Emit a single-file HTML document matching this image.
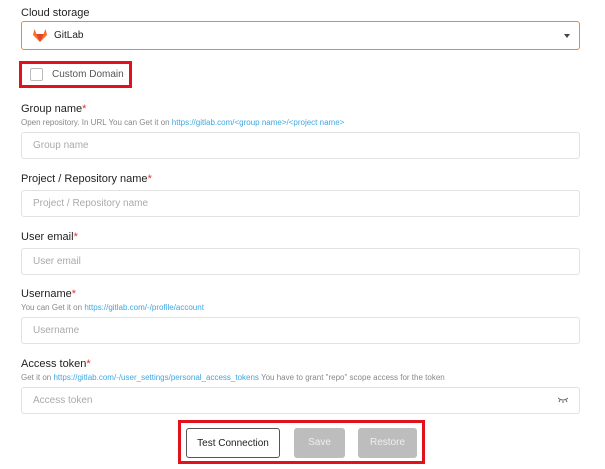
<!DOCTYPE html><html><head><style>
body{margin:0;width:605px;height:469px;background:#fff;font-family:"Liberation Sans",sans-serif;position:relative;overflow:hidden}
.a{position:absolute}
.lbl{font-size:11px;color:#222}
.lbl b{color:#e5332a;font-weight:normal}
.hint{font-size:8px;color:#888}
.hint span{color:#3fa7e0}
.in{position:absolute;left:21px;border:1px solid #e2e2e2;border-radius:3px;font-size:10px;color:#aaa;line-height:26px;padding-left:11px;box-sizing:border-box;width:559px;height:27px}
.btn{position:absolute;top:428px;height:30px;border-radius:3px;font-size:10px;text-align:center;line-height:30px;box-sizing:border-box}
</style></head><body>
<div class="a lbl" style="left:21px;top:7px">Cloud storage</div>
<div class="a" style="left:21px;top:21px;width:559px;height:29px;border:1px solid #f5891d;border-radius:3px;box-sizing:border-box"></div>
<svg class="a" style="left:33px;top:29px" width="14" height="13" viewBox="0 0 14 13"><path d="M7 13 L0 6 L1.5 0 L3.5 5 H10.5 L12.5 0 L14 6 Z" fill="#fc6d26"/><path d="M7 13 L3.5 5 H10.5 Z" fill="#e24329"/></svg>
<div class="a" style="left:54px;top:30px;font-size:10px;color:#222">GitLab</div>
<div class="a" style="left:564px;top:34px;width:0;height:0;border-left:3.5px solid transparent;border-right:3.5px solid transparent;border-top:4px solid #444"></div>
<div class="a" style="left:19px;top:61px;width:113px;height:27px;border:3px solid #e0131c;box-sizing:border-box"></div>
<div class="a" style="left:30px;top:68px;width:11px;height:11px;border:1px solid #bbb;border-radius:2px"></div>
<div class="a" style="left:52px;top:69px;font-size:10px;color:#555">Custom Domain</div>
<div class="a lbl" style="left:21px;top:103px">Group name<b>*</b></div>
<div class="a hint" style="left:21px;top:118px">Open repository. In URL You can Get it on <span>https://gitlab.com/&lt;group name&gt;/&lt;project name&gt;</span></div>
<div class="in" style="top:132px">Group name</div>
<div class="a lbl" style="left:21px;top:173px">Project / Repository name<b>*</b></div>
<div class="in" style="top:190px">Project / Repository name</div>
<div class="a lbl" style="left:21px;top:231px">User email<b>*</b></div>
<div class="in" style="top:248px">User email</div>
<div class="a lbl" style="left:21px;top:288px">Username<b>*</b></div>
<div class="a hint" style="left:21px;top:303px">You can Get it on <span>https://gitlab.com/-/profile/account</span></div>
<div class="in" style="top:317px">Username</div>
<div class="a lbl" style="left:21px;top:358px">Access token<b>*</b></div>
<div class="a hint" style="left:21px;top:373px">Get it on <span>https://gitlab.com/-/user_settings/personal_access_tokens</span> You have to grant "repo" scope access for the token</div>
<div class="in" style="top:387px">Access token</div>
<svg class="a" style="left:558px;top:397px" width="10" height="6" viewBox="0 0 10 6"><path d="M0 1 Q5 5 10 1 M2 3 L1 5 M5 4 V6 M8 3 L9 5" stroke="#666" fill="none" stroke-width="1"/></svg>
<div class="a" style="left:178px;top:420px;width:247px;height:44px;border:3px solid #e0131c;box-sizing:border-box"></div>
<div class="btn" style="left:186px;width:94px;border:1px solid #555;color:#222">Test Connection</div>
<div class="btn" style="left:294px;width:51px;background:#bdbdbd;color:#eee">Save</div>
<div class="btn" style="left:358px;width:59px;background:#bdbdbd;color:#eee">Restore</div>
</body></html>
